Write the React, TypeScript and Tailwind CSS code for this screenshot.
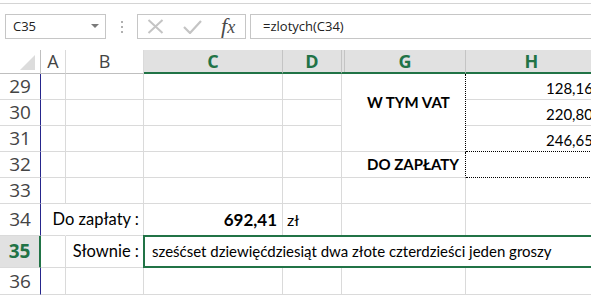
import * as React from "react"

const cell = "border-r border-b border-[#dadada] font-['Lato',sans-serif] text-[15px] text-black flex items-center"
const colHead = "border-b-2 border-b-[#217346] border-r border-r-[#c4c4c4] bg-[#e1e1e1] flex items-center justify-center text-[18px] font-bold text-[#217346] font-['Open_Sans',sans-serif]"
const rowHead = "border-b border-b-[#dadada] border-r border-r-[#26268c] flex items-center justify-center text-[19px] text-[#444] font-['Open_Sans',sans-serif]"

function RowNum({ n, active }: { n: number; active?: boolean }) {
  if (active) {
    return (
      <div className="border-b border-b-[#dadada] border-r-2 border-r-[#217346] bg-[#e1e1e1] flex items-center justify-center text-[19px] font-bold text-[#217346] font-['Open_Sans',sans-serif]">
        {n}
      </div>
    )
  }
  return <div className={rowHead}>{n}</div>
}

function Toolbar() {
  return (
    <div className="flex h-[25px] items-stretch font-['Open_Sans',sans-serif]">
      <div className="ml-[5px] w-[101px] border border-[#c6c6c6] flex items-center justify-between pl-[7px] pr-[6px] text-[13px] text-[#222]">
        <span>C35</span>
        <svg width="8" height="5" viewBox="0 0 8 5">
          <path d="M0 0h8L4 4z" fill="#7a7a7a" />
        </svg>
      </div>
      <div className="ml-[15px] w-[2px] flex flex-col justify-center gap-[3px]">
        <span className="block w-[2px] h-[2px] bg-[#b0b0b0]" />
        <span className="block w-[2px] h-[2px] bg-[#b0b0b0]" />
        <span className="block w-[2px] h-[2px] bg-[#b0b0b0]" />
      </div>
      <div className="ml-[14px] w-[109px] border border-[#c6c6c6] flex items-center pl-[9px] gap-[19px]">
        <svg width="17" height="15" viewBox="0 0 17 15">
          <path d="M1.5 1l14 13M15.5 1l-14 13" stroke="#c4c4c4" strokeWidth="2" />
        </svg>
        <svg width="19" height="14" viewBox="0 0 19 14">
          <path d="M1 7l6 6L18 1" stroke="#c4c4c4" strokeWidth="2.2" fill="none" />
        </svg>
        <span className="font-['Liberation_Serif',serif] italic text-[22px] text-[#4a4a4a] leading-none -mt-[2px]">
          f<span className="text-[18px]">x</span>
        </span>
      </div>
      <div className="ml-[4px] flex-1 border border-r-0 border-[#c6c6c6] flex items-center pl-[12px] text-[13px] text-[#222]">
        =zlotych(C34)
      </div>
    </div>
  )
}

export default function App() {
  return (
    <div className="w-[591px] h-[295px] overflow-hidden bg-white">
      <div className="h-[3px]" />
      <div className="h-px bg-[#d4d4d4]" />
      <div className="pt-[10px]">
        <Toolbar />
      </div>
      <div className="mt-[11px] grid grid-cols-[41px_25px_78px_139px_59px_124px_132px] grid-rows-[24px_26px_26px_26px_26px_26px_32px_32px_27px] w-[624px]">
        {/* header */}
        <div className="border-b border-r border-[#bfbfbf] relative flex items-end justify-end pr-[5px] pb-[3px]">
          <svg width="15" height="15" viewBox="0 0 15 15">
            <path d="M15 0V15H0z" fill="#dcdcdc" />
          </svg>
        </div>
        <div className="border-b border-b-[#bfbfbf] border-r border-r-[#dadada] flex items-center justify-center text-[18px] text-[#444] font-['Open_Sans',sans-serif]">A</div>
        <div className="border-b border-b-[#bfbfbf] border-r border-r-[#dadada] flex items-center justify-center text-[18px] text-[#444] font-['Open_Sans',sans-serif]">B</div>
        <div className={colHead}>C</div>
        <div className={colHead}>D</div>
        <div className="border-b-2 border-b-[#217346] border-r border-r-[#c4c4c4] bg-[#e1e1e1] flex font-['Open_Sans',sans-serif]">
          <div className="ml-[2px] flex-1 border-l border-l-[#c4c4c4] flex items-center justify-center text-[18px] font-bold text-[#217346]">G</div>
        </div>
        <div className={colHead}>H</div>

        {/* 29 */}
        <RowNum n={29} />
        <div className={cell} />
        <div className={cell} />
        <div className={cell} />
        <div className={cell} />
        <div className={`${cell} row-span-3 items-start pt-[17px] pl-[25px] text-[15.5px] font-bold border-r-black [border-right-style:dotted]`}>
          W TYM VAT
        </div>
        <div className={`${cell} pl-[80px] pt-[4px]`}>128,16</div>

        {/* 30 */}
        <RowNum n={30} />
        <div className={cell} />
        <div className={cell} />
        <div className={cell} />
        <div className={cell} />
        <div className={`${cell} pl-[80px] pt-[4px]`}>220,80</div>

        {/* 31 */}
        <RowNum n={31} />
        <div className={cell} />
        <div className={cell} />
        <div className={cell} />
        <div className={cell} />
        <div className={`${cell} pl-[80px] pt-[4px] border-b-black [border-bottom-style:dotted]`}>246,65</div>

        {/* 32 */}
        <RowNum n={32} />
        <div className={cell} />
        <div className={cell} />
        <div className={cell} />
        <div className={cell} />
        <div className={`${cell} pl-[25px] text-[15.5px] font-bold border-r-black [border-right-style:dotted]`}>DO ZAPŁATY</div>
        <div className={`${cell} border-b-black [border-bottom-style:dotted]`} />

        {/* 33 */}
        <RowNum n={33} />
        <div className={cell} />
        <div className={cell} />
        <div className={cell} />
        <div className={cell} />
        <div className={cell} />
        <div className={cell} />

        {/* 34 */}
        <RowNum n={34} />
        <div className={`${cell} border-r-transparent`} />
        <div className={`${cell} justify-end pr-[4px] whitespace-nowrap text-[16.5px]`}>
          <span className="shrink-0">Do zapłaty :</span>
        </div>
        <div className={`${cell} justify-end pr-[5px] text-[17px] font-bold`}>692,41</div>
        <div className={`${cell} pl-[4px] text-[16px]`}>zł</div>
        <div className={cell} />
        <div className={cell} />

        {/* 35 */}
        <RowNum n={35} active />
        <div className={cell} />
        <div className={`${cell} justify-end pr-[4px] whitespace-nowrap text-[16.5px]`}>Słownie :</div>
        <div className={`${cell} col-span-4 relative pl-[8px] whitespace-nowrap`}>
          <div className="absolute -inset-y-[1px] -left-[1px] -right-[1px] border-2 border-[#217346]" />
          sześćset dziewięćdziesiąt dwa złote czterdzieści jeden groszy
        </div>

        {/* 36 */}
        <RowNum n={36} />
        <div className={cell} />
        <div className={cell} />
        <div className={cell} />
        <div className={cell} />
        <div className={cell} />
        <div className={cell} />
      </div>
    </div>
  )
}
